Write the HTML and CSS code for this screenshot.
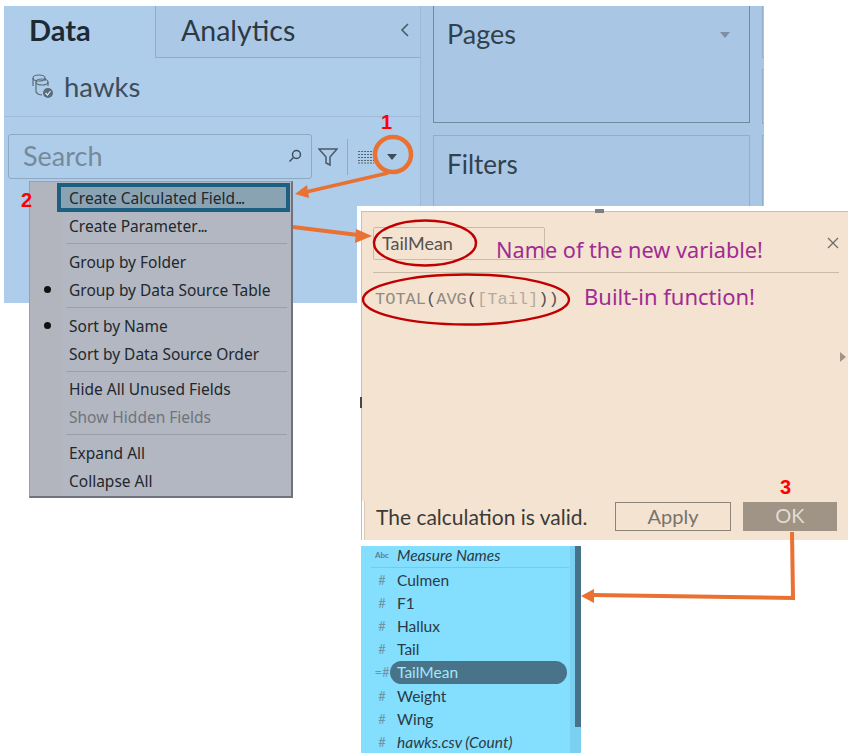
FILE: index.html
```html
<!DOCTYPE html>
<html lang="en">
<head>
    <meta charset="UTF-8">
    <meta name="viewport" content="width=device-width, initial-scale=1.0">
    <title>Creating a calculated field</title>
    <link rel="stylesheet" href="styles.css">
</head>
<body>
    <div class="canvas">
        <!-- workbook side panels -->
        <div class="workbook">
            <div class="data-pane">
                <div class="tabs">
                    <div class="tab tab-active">Data</div>
                    <div class="tab tab-other">Analytics
                        <svg class="collapse" width="10" height="16" viewBox="0 0 10 16"><path d="M8 2 L2 8 L8 14" fill="none" stroke="#4a5a68" stroke-width="1.6"/></svg>
                    </div>
                </div>
                <div class="source">
                    <svg width="24" height="26" viewBox="0 0 24 26" fill="none" stroke="#5b6b78" stroke-width="1.2">
                        <ellipse cx="9" cy="5" rx="6" ry="3"/>
                        <path d="M3 5 V13 M15 5 V8"/>
                        <ellipse cx="12" cy="9" rx="6" ry="3"/>
                        <path d="M6 9 V19 Q8 22 12 22 M18 9 V13"/>
                        <circle cx="18" cy="20" r="5" fill="#5b6b78" stroke="none"/>
                        <path d="M15.5 20 L17.5 22 L20.5 18" stroke="#dfe9f2"/>
                    </svg>
                    <span>hawks</span>
                </div>
                <div class="search-row">
                    <div class="search">
                        <span>Search</span>
                        <svg width="14" height="14" viewBox="0 0 14 14" fill="none" stroke="#3f4d59" stroke-width="1.5"><circle cx="8.5" cy="5.5" r="4"/><path d="M5.5 8.5 L1.5 12.5"/></svg>
                    </div>
                    <svg class="filter-icon" width="20" height="20" viewBox="0 0 20 20" fill="none" stroke="#4a5a68" stroke-width="1.5"><path d="M1 2 H19 L12 10 V18 L8 16 V10 Z"/></svg>
                    <div class="vline"></div>
                    <svg class="grid-icon" width="16" height="14" viewBox="0 0 16 14" fill="none" stroke="#56656f" stroke-width="1" stroke-dasharray="2 1"><path d="M0 1.5 H16 M0 4.5 H16 M0 7.5 H16 M0 10.5 H16 M0 13 H16"/></svg>
                    <div class="caret"></div>
                </div>
            </div>
            <div class="shelves">
                <div class="card card-pages">
                    <span>Pages</span>
                    <div class="caret caret-light"></div>
                </div>
                <div class="card card-filters"><span>Filters</span></div>
            </div>
            <div class="edge-strip">
                <div class="edge edge-top"></div>
                <div class="edge edge-mid"></div>
                <div class="edge edge-bottom"></div>
            </div>
        </div>

        <!-- context menu -->
        <div class="menu">
            <div class="menu-item menu-selected">Create Calculated Field<span class="dots">...</span></div>
            <div class="menu-item">Create Parameter<span class="dots">...</span></div>
            <div class="menu-sep"></div>
            <div class="menu-item">Group by Folder</div>
            <div class="menu-item menu-checked">Group by Data Source Table</div>
            <div class="menu-sep"></div>
            <div class="menu-item menu-checked">Sort by Name</div>
            <div class="menu-item">Sort by Data Source Order</div>
            <div class="menu-sep menu-sep-tight"></div>
            <div class="menu-item">Hide All Unused Fields</div>
            <div class="menu-item menu-disabled">Show Hidden Fields</div>
            <div class="menu-sep"></div>
            <div class="menu-item">Expand All</div>
            <div class="menu-item">Collapse All</div>
        </div>

        <!-- calculation dialog -->
        <div class="dialog">
            <div class="dialog-head">
                <div class="name-field">TailMean</div>
                <svg class="close" width="12" height="12" viewBox="0 0 12 12" stroke="#6c6a66" stroke-width="1.2"><path d="M1 1 L11 11 M11 1 L1 11"/></svg>
            </div>
            <div class="formula"><span class="fn">TOTAL</span>(<span class="fn">AVG</span>(<span class="ref">[Tail]</span>))</div>
            <div class="side-arrow"></div>
            <div class="dialog-foot">
                <span class="valid">The calculation is valid.</span>
                <div class="btn btn-apply">Apply</div>
                <div class="btn btn-ok">OK</div>
            </div>
        </div>

        <!-- field list -->
        <div class="fields">
            <div class="field field-head"><span class="type type-abc">Abc</span><i>Measure Names</i></div>
            <div class="field"><span class="type">#</span>Culmen</div>
            <div class="field"><span class="type">#</span>F1</div>
            <div class="field"><span class="type">#</span>Hallux</div>
            <div class="field"><span class="type">#</span>Tail</div>
            <div class="field field-selected"><span class="type">=#</span><b>TailMean</b></div>
            <div class="field"><span class="type">#</span>Weight</div>
            <div class="field"><span class="type">#</span>Wing</div>
            <div class="field"><span class="type">#</span><i>hawks.csv (Count)</i></div>
            <div class="scroll"><div class="scroll-thumb"></div></div>
        </div>

        <!-- annotations on top of the screenshots -->
        <svg class="marks" width="855" height="756" viewBox="0 0 855 756">
            <rect x="595" y="209" width="9" height="4" fill="#7d7f80"/>
            <rect x="360" y="397" width="2" height="11" fill="#4a4740"/>
            <ellipse cx="393" cy="154.5" rx="18" ry="17.5" fill="none" stroke="#e97132" stroke-width="4.5"/>
            <path d="M388 173 L306 192" stroke="#e97132" stroke-width="3.5" fill="none"/>
            <path d="M295 194 L307 185 L309 198 Z" fill="#e97132"/>
            <path d="M293 227 L358 235" stroke="#e97132" stroke-width="4" fill="none"/>
            <path d="M372 236 L356 229 L355 243 Z" fill="#e97132"/>
            <path d="M792 532 L793 598 L592 595" stroke="#e97132" stroke-width="4" fill="none"/>
            <path d="M581 596 L594 589 L594 603 Z" fill="#e97132"/>
            <ellipse cx="425" cy="243" rx="51" ry="22.5" fill="none" stroke="#c00000" stroke-width="2.4"/>
            <ellipse cx="466" cy="299.5" rx="103" ry="25" fill="none" stroke="#c00000" stroke-width="2.4"/>
        </svg>
        <div class="step step-1">1</div>
        <div class="step step-2">2</div>
        <div class="step step-3">3</div>
        <div class="note note-name">Name of the new variable!</div>
        <div class="note note-fn">Built-in function!</div>
    </div>
</body>
</html>
```
FILE: styles.css
```css
body {
    margin: 0;
    background-color: #fff;
    font-family: Lato, Arial, sans-serif;
}
.canvas {
    position: relative;
    width: 855px;
    height: 756px;
    overflow: hidden;
}

/* pieces of the collage */
.workbook {
    position: absolute;
    left: 4px;
    top: 6px;
    width: 760px;
    height: 297px;
    display: flex;
    background-color: #a9c7e4;
}
.menu {
    position: absolute;
    left: 29px;
    top: 181px;
    width: 264px;
    height: 317px;
}
.dialog {
    position: absolute;
    left: 361px;
    top: 211px;
    width: 487px;
    height: 329px;
}
.fields {
    position: absolute;
    left: 361px;
    top: 546px;
    width: 220px;
    height: 207px;
}
.marks {
    position: absolute;
    left: 0;
    top: 0;
}

/* data pane */
.data-pane {
    width: 417px;
    box-sizing: border-box;
    flex: none;
    background-color: #aecdea;
    border-right: 1px solid #9dbad6;
}
.tabs {
    display: flex;
    height: 52px;
}
.tab {
    font-size: 29px;
    line-height: 48px;
    color: #2c3a45;
}
.tab-active {
    width: 151px;
    box-sizing: border-box;
    padding-left: 25px;
    font-weight: bold;
    color: #1e2a33;
}
.tab-other {
    flex: 1;
    display: flex;
    justify-content: space-between;
    align-items: center;
    padding: 0 10px 4px 25px;
    font-size: 28.5px;
    background-color: #abc9e6;
    border-left: 1px solid #8fadc9;
    border-bottom: 1px solid #8fadc9;
}
.source {
    display: flex;
    align-items: center;
    gap: 10px;
    height: 59px;
    padding: 0 0 2px 26px;
    box-sizing: border-box;
    border-bottom: 1px solid #9dbad6;
    font-size: 27.5px;
    color: #3f4d59;
}
.search-row {
    display: flex;
    align-items: center;
    height: 45px;
    margin-top: 17px;
    padding-left: 4px;
}
.search {
    width: 304px;
    height: 45px;
    box-sizing: border-box;
    display: flex;
    justify-content: space-between;
    align-items: center;
    padding: 0 9px 2px 14px;
    border: 1px solid #8fa9c2;
    border-radius: 3px;
    font-size: 27px;
    color: #76899a;
}
.filter-icon {
    margin-left: 6px;
}
.vline {
    width: 1px;
    height: 36px;
    margin-left: 9px;
    background-color: #8fa9c2;
}
.grid-icon {
    margin-left: 10px;
}
.caret {
    width: 0;
    height: 0;
    margin-left: 13px;
    border-left: 5px solid transparent;
    border-right: 5px solid transparent;
    border-top: 6px solid #3f4d59;
}

/* shelves */
.shelves {
    width: 341px;
    flex: none;
    padding-left: 12px;
    box-sizing: border-box;
}
.card {
    box-sizing: border-box;
    width: 317px;
    padding: 11px 13px;
    font-size: 27px;
    color: #33414d;
    border: 1px solid #93aec8;
}
.card-pages {
    height: 117px;
    border-top: none;
    border-color: #73899d;
    display: flex;
    justify-content: space-between;
    align-items: flex-start;
}
.card-filters {
    height: 200px;
    margin-top: 12px;
    padding-top: 12px;
    border-bottom: none;
    font-size: 26px;
}
.caret-light {
    margin: 15px 6px 0 0;
    border-top-color: #7d8fa1;
}
.edge-strip {
    flex: 1;
}
.edge {
    border-left: 1px solid #93aec8;
}
.edge-top {
    height: 51px;
    border-bottom: 1px solid #93aec8;
}
.edge-mid {
    height: 53px;
    margin-top: 11px;
    border-top: 1px solid #93aec8;
    border-bottom: 1px solid #93aec8;
}
.edge-bottom {
    height: 70px;
    margin-top: 11px;
    border-top: 1px solid #93aec8;
}

/* context menu */
.menu {
    box-sizing: border-box;
    padding: 1px 2px 0 0;
    background: linear-gradient(to right, #b3b5be 33px, #b2b7c1 33px);
    border: 1px solid #9a9fa8;
    border-right: 2px solid #6f747c;
    border-bottom: 2px solid #6f747c;
    font-family: "Noto Sans", Arial, sans-serif;
    font-size: 15.5px;
    color: #22272d;
    overflow: hidden;
}
.menu-item {
    position: relative;
    height: 28px;
    line-height: 28px;
    padding-left: 39px;
    white-space: nowrap;
}
.dots {
    letter-spacing: -1.2px;
}
.menu-selected {
    box-sizing: border-box;
    height: 29px;
    line-height: 22px;
    margin: 0 -1px 0 27px;
    padding-left: 8px;
    background-color: #8aa3b3;
    border: 4px solid #1c5f80;
}
.menu-checked::before {
    content: "";
    position: absolute;
    left: 14px;
    top: 10px;
    width: 7px;
    height: 7px;
    border-radius: 50%;
    background-color: #111;
}
.menu-disabled {
    color: #70747b;
}
.menu-sep {
    height: 1px;
    margin: 3px 2px 4px 36px;
    background-color: #9a9fa8;
}
.menu-sep-tight {
    margin-bottom: 3px;
}

/* dialog */
.dialog {
    display: flex;
    flex-direction: column;
    box-sizing: border-box;
    background-color: #f4e3d0;
    border-left: 1px solid #cdbfae;
    border-top: 1px solid #cdbfae;
    box-shadow: -4px -5px 0 #fff;
}
.dialog-head {
    display: flex;
    justify-content: space-between;
    align-items: flex-start;
    height: 61px;
    box-sizing: border-box;
    margin: 0 9px 0 11px;
    padding-top: 15px;
    border-bottom: 1px solid #c9bbaa;
}
.name-field {
    width: 172px;
    height: 33px;
    box-sizing: border-box;
    padding-left: 8px;
    border: 1px solid #c9bbaa;
    border-radius: 2px;
    font-size: 18px;
    line-height: 31px;
    color: #55524e;
}
.close {
    margin-top: 10px;
}
.formula {
    margin: 15px 0 0 13px;
    font-family: "Liberation Mono", monospace;
    font-size: 17px;
    line-height: 23px;
    color: #55524e;
}
.formula .fn {
    color: #8f8b84;
}
.formula .ref {
    color: #b0aca4;
}
.side-arrow {
    width: 0;
    height: 0;
    margin: 41px 0 0 478px;
    border-left: 6px solid #9d958a;
    border-top: 5px solid transparent;
    border-bottom: 5px solid transparent;
}
.dialog-foot {
    display: flex;
    align-items: center;
    margin-top: auto;
    height: 39px;
    padding: 0 10px 8px 12px;
    box-sizing: border-box;
    border-left: 2px solid #fff;
    box-shadow: inset 1px 0 #d8c8b5;
}
.valid {
    width: 239px;
    font-size: 21px;
    color: #3b3a38;
}
.btn {
    height: 29px;
    box-sizing: border-box;
    text-align: center;
    font-size: 20px;
    line-height: 27px;
}
.btn-apply {
    width: 116px;
    margin-right: 12px;
    border: 1px solid #8b8378;
    color: #77736c;
}
.btn-ok {
    width: 94px;
    background-color: #a09486;
    color: #e5dcd0;
}

/* field list */
.fields {
    background-color: #84dfff;
    font-size: 15.5px;
    color: #2b3a46;
}
.field {
    display: flex;
    align-items: center;
    height: 23.2px;
    padding-left: 36px;
    position: relative;
}
.field-head {
    height: 22px;
    margin: 0 12px 0 10px;
    padding: 0 0 4px 26px;
    box-sizing: border-box;
    border-bottom: 1px solid #74cbe8;
}
.type {
    position: absolute;
    left: 13px;
    width: 16px;
    text-align: center;
    font-size: 13px;
    color: #6d95a5;
}
.type-abc {
    left: 3px;
    font-size: 8px;
    font-weight: bold;
    color: #567e8f;
}
.field-selected b {
    font-weight: normal;
    box-sizing: border-box;
    width: 177px;
    height: 23px;
    margin-left: -7px;
    padding-left: 7px;
    line-height: 22px;
    border-radius: 12px;
    background-color: #487389;
    color: #a6e6fa;
}
.scroll {
    position: absolute;
    left: 209px;
    top: 0;
    width: 11px;
    height: 100%;
    background-color: #7bd0ef;
}
.scroll-thumb {
    margin-left: 5px;
    width: 6px;
    height: 181px;
    background-color: #467389;
}

/* annotations */
.step {
    position: absolute;
    font-family: "Liberation Sans", Arial, sans-serif;
    font-size: 20px;
    font-weight: bold;
    line-height: 22px;
    color: #ff0000;
}
.step-1 {
    left: 381px;
    top: 111px;
}
.step-2 {
    left: 21px;
    top: 189px;
}
.step-3 {
    left: 780px;
    top: 476px;
}
.note {
    position: absolute;
    font-family: "Noto Sans", Arial, sans-serif;
    line-height: 28px;
    color: #a02b93;
    white-space: nowrap;
}
.note-name {
    left: 496px;
    top: 236px;
    font-size: 21.7px;
}
.note-fn {
    left: 584px;
    top: 282px;
    font-size: 22px;
}
```
